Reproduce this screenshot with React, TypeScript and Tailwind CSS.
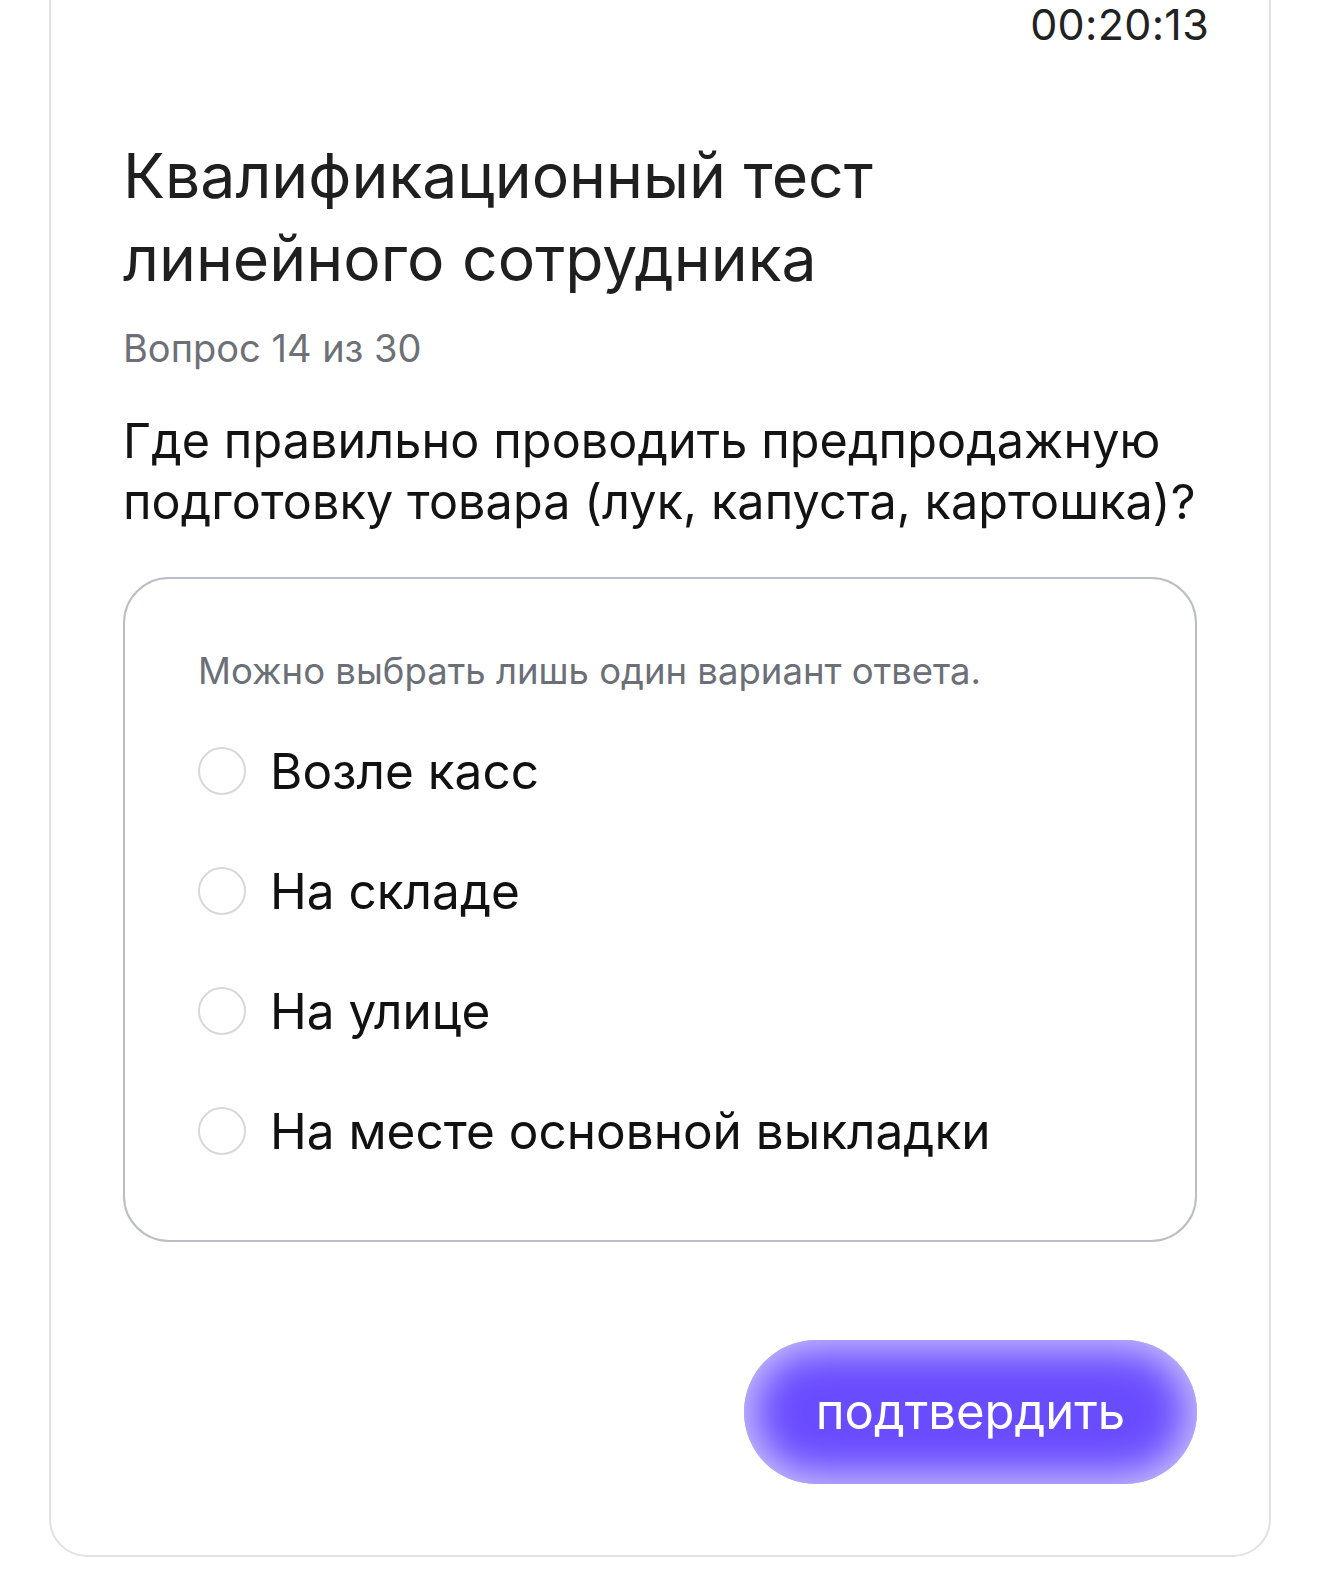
import React, { useState } from "react";

const options = ["Возле касс", "На складе", "На улице", "На месте основной выкладки"];

export default function App() {
  const [selected, setSelected] = useState<number | null>(null);

  return (
    <div
      className="min-h-[1592px] bg-white px-[49px] overflow-hidden"
      style={{ fontFamily: "Inter, 'Noto Sans', sans-serif" }}
    >
      <div className="-mt-[60px] rounded-[38px] border-2 border-[#e2e2e2] bg-white pl-[72px] pr-[72px] pt-[61px] pb-[71px]">
        <div className="-mr-[12px] flex justify-end">
          <span className="text-[43px] leading-[43px] text-[#222] tracking-[0.3px]">00:20:13</span>
        </div>

        <h1 className="mt-[88px] text-[62.5px] leading-[83px] font-normal text-[#1f1f1f]">
          Квалификационный тест
          <br />
          линейного сотрудника
        </h1>

        <div className="mt-[26px] text-[38px] leading-[44px] text-[#6d7077]">Вопрос 14 из 30</div>

        <p className="-mr-[24px] mt-[40px] text-[48.5px] leading-[61px] text-[#131313] tracking-[0.1px]">
          Где правильно проводить предпродажную подготовку товара (лук, капуста, картошка)?
        </p>

        <div className="mt-[45px] rounded-[46px] border-2 border-[#babec6] pl-[73px] pr-[40px] pt-[70px] pb-[49px]">
          <div className="text-[36.5px] leading-[44px] text-[#6b6f77]">Можно выбрать лишь один вариант ответа.</div>
          <ul className="mt-[18px] flex flex-col">
            {options.map((o, i) => (
              <li key={o}>
                <button
                  type="button"
                  onClick={() => setSelected(i)}
                  className="flex h-[120px] w-full items-center gap-[24px] text-left"
                >
                  <span className="flex h-[48px] w-[48px] shrink-0 items-center justify-center rounded-full border-[2.5px] border-[#d8d8d8]">
                    {selected === i && <span className="h-[22px] w-[22px] rounded-full bg-[#6c4fff]" />}
                  </span>
                  <span className="text-[49.5px] leading-[58px] text-[#111]">{o}</span>
                </button>
              </li>
            ))}
          </ul>
        </div>

        <div className="mt-[98px] flex justify-end">
          <button
            type="button"
            className="flex h-[144px] w-[453px] items-center justify-center rounded-full bg-[#6a4cff] text-[49px] text-white shadow-[inset_0_0_40px_8px_rgba(255,255,255,0.7)]"
          >
            подтвердить
          </button>
        </div>
      </div>
    </div>
  );
}
